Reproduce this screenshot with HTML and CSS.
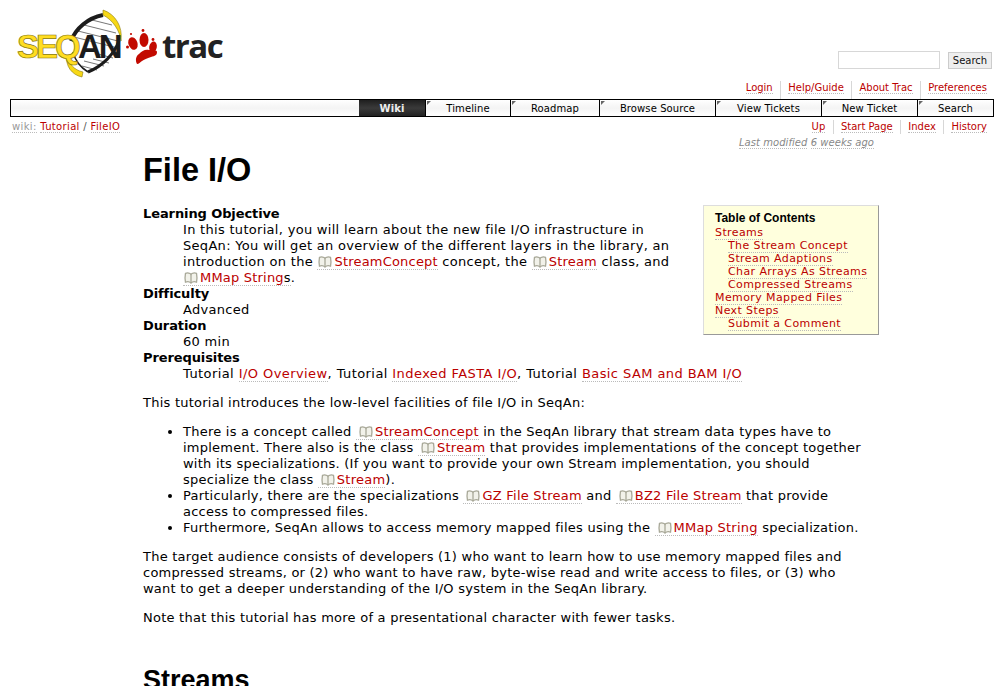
FILE: index.html
```html
<!DOCTYPE html>
<html>
  <head>
    <title>File I/O</title>
    <link rel="stylesheet" href="styles.css">
  </head>
  <body>
    <svg width="0" height="0" class="defs">
      <symbol id="book" viewBox="0 0 15 13">
        <path d="M7.500 2.500C6.500 1 3.500.6 1.500 1.500C1 4 1 8 1.500 11C3.500 10.300 6 10.500 7.500 12C9 10.500 11.500 10.300 13.500 11C14 8 14 4 13.500 1.500C11.500.6 8.500 1 7.500 2.500z" fill="#f2f2ea" stroke="#a8a898" stroke-width="1.400"/>
        <path d="M7.500 2.500v9.500" stroke="#a8a898" stroke-width="1.400"/>
      </symbol>
    </svg>

    <div id="banner">
      <svg class="logo" width="230" height="82" viewBox="0 0 230 82">
        <path d="M72 42C78 30 90 20 104 18C114 24 120 34 118 43C112 56 102 68 88 74C78 68 71 54 72 42z" fill="#fff"/>
        <path d="M92 22l20 5M84 27l32 8M78 33l40 10M74 39l44 11M98 56l15 4M93 61l16 4M84 63l20 5M82 68l15 4" stroke="#777" stroke-width="1" fill="none"/>
        <path d="M71 43C76 30 88 20 103 17" fill="none" stroke="#1c1c1c" stroke-width="4"/>
        <path d="M119 43C114 56 103 68 88 74" fill="none" stroke="#1c1c1c" stroke-width="3"/>
        <path d="M73 54C75 62 80 69 88 74" fill="none" stroke="#1c1c1c" stroke-width="1.500"/>
        <path d="M103 12C115 16 123 28 121 43C120 33 113 22 103 17z" fill="#f7d816" stroke="#8a7a10" stroke-width=".6"/>
        <path d="M67 57C69 66 74 72 83 74L82 79C72 77 65 68 67 57z" fill="#f7d816" stroke="#8a7a10" stroke-width=".6"/>
        <text x="17" y="60" class="logo-seq">SEQ</text>
        <text x="78" y="60" class="logo-an">AN</text>
        <g fill="#c20a00">
          <path d="M137 66C135 62 136 58 139 56C142 53 145 51 149 52C153 52 157 52 157 54C157 57 155 58 151 59C147 60 144 62 142 63C140 64 139 66 137 66z"/>
          <ellipse cx="133" cy="45.500" rx="4.500" ry="6.500" transform="rotate(-20 133 45.500)"/>
          <ellipse cx="144" cy="42" rx="4.500" ry="7"/>
          <ellipse cx="153" cy="49" rx="3.800" ry="5.500" transform="rotate(12 153 49)"/>
          <circle cx="127.500" cy="49" r="1.500"/>
          <circle cx="143" cy="32.500" r="1.400"/>
          <circle cx="153" cy="41.500" r="1.400"/>
          <circle cx="131" cy="36" r="1.100"/>
        </g>
        <text x="162" y="60" class="logo-trac">trac</text>
      </svg>
      <form class="search">
        <input type="text" class="search-box">
        <input type="submit" class="search-btn" value="Search">
      </form>
    </div>

    <ul class="metanav">
      <li><a href="#">Login</a></li>
      <li><a href="#">Help/Guide</a></li>
      <li><a href="#">About Trac</a></li>
      <li><a href="#">Preferences</a></li>
    </ul>

    <ul class="mainnav">
      <li class="active" style="width: 66px"><a href="#">Wiki</a></li>
      <li style="width: 85px"><a href="#">Timeline</a></li>
      <li style="width: 89px"><a href="#">Roadmap</a></li>
      <li style="width: 116px"><a href="#">Browse Source</a></li>
      <li style="width: 106px"><a href="#">View Tickets</a></li>
      <li style="width: 96px"><a href="#">New Ticket</a></li>
      <li style="width: 76px"><a href="#">Search</a></li>
    </ul>

    <div class="ctxtnav">
      <div class="path">
        <span class="dotted muted">wiki:</span>
        <a href="#">Tutorial</a> <span class="slash">/</span> <a href="#">FileIO</a>
      </div>
      <ul class="ctxt-links">
        <li><a href="#">Up</a></li>
        <li><a href="#">Start Page</a></li>
        <li><a href="#">Index</a></li>
        <li><a href="#">History</a></li>
      </ul>
    </div>
    <p class="lastmod"><span class="dotted">Last modified</span> <span class="dotted">6 weeks ago</span></p>

    <div id="content">
      <h1>File I/O</h1>

      <div class="toc">
        <h4>Table of Contents</h4>
        <ol>
          <li><a href="#">Streams</a>
            <ol>
              <li><a href="#">The Stream Concept</a></li>
              <li><a href="#">Stream Adaptions</a></li>
              <li><a href="#">Char Arrays As Streams</a></li>
              <li><a href="#">Compressed Streams</a></li>
            </ol>
          </li>
          <li><a href="#">Memory Mapped Files</a></li>
          <li><a href="#">Next Steps</a>
            <ol>
              <li><a href="#">Submit a Comment</a></li>
            </ol>
          </li>
        </ol>
      </div>

      <dl>
        <dt>Learning Objective</dt>
        <dd>In this tutorial, you will learn about the new file I/O infrastructure in SeqAn: You will get an overview of the different layers in the library, an introduction on the <a href="#" class="wiki"><svg class="book"><use href="#book"/></svg>StreamConcept</a> concept, the <a href="#" class="wiki"><svg class="book"><use href="#book"/></svg>Stream</a> class, and <a href="#" class="wiki"><svg class="book"><use href="#book"/></svg>MMap String<span class="plain">s</span></a>.</dd>
        <dt>Difficulty</dt>
        <dd>Advanced</dd>
        <dt>Duration</dt>
        <dd>60 min</dd>
        <dt>Prerequisites</dt>
        <dd class="prereq">Tutorial <a href="#">I/O Overview</a>, Tutorial <a href="#">Indexed FASTA I/O</a>, Tutorial <a href="#">Basic SAM and BAM I/O</a></dd>
      </dl>

      <p>This tutorial introduces the low-level facilities of file I/O in SeqAn:</p>

      <ul class="bullets">
        <li>There is a concept called <a href="#" class="wiki"><svg class="book"><use href="#book"/></svg>StreamConcept</a> in the SeqAn library that stream data types have to implement. There also is the class <a href="#" class="wiki"><svg class="book"><use href="#book"/></svg>Stream</a> that provides implementations of the concept together with its specializations. (If you want to provide your own Stream implementation, you should specialize the class <a href="#" class="wiki"><svg class="book"><use href="#book"/></svg>Stream</a>).</li>
        <li>Particularly, there are the specializations <a href="#" class="wiki"><svg class="book"><use href="#book"/></svg>GZ File Stream</a> and <a href="#" class="wiki"><svg class="book"><use href="#book"/></svg>BZ2 File Stream</a> that provide access to compressed files.</li>
        <li>Furthermore, SeqAn allows to access memory mapped files using the <a href="#" class="wiki"><svg class="book"><use href="#book"/></svg>MMap String</a> specialization.</li>
      </ul>

      <p>The target audience consists of developers (1) who want to learn how to use memory mapped files and compressed streams, or (2) who want to have raw, byte-wise read and write access to files, or (3) who want to get a deeper understanding of the I/O system in the SeqAn library.</p>

      <p>Note that this tutorial has more of a presentational character with fewer tasks.</p>

      <h2>Streams</h2>
    </div>
  </body>
</html>
```

FILE: styles.css
```css
html, body {
  height: 686px;
  overflow: hidden;
}

body {
  margin: 0;
  background: #fff;
  color: #000;
  font: 13px/16px "DejaVu Sans", Verdana, sans-serif;
}

a {
  color: #b00;
  text-decoration: none;
  border-bottom: 1px dotted #bbb;
}

.defs {
  display: block;
  height: 0;
}

ul, ol {
  list-style: none;
  margin: 0;
  padding: 0;
}

.dotted {
  border-bottom: 1px dotted #bbb;
}

/* Header */
#banner {
  display: flex;
  justify-content: space-between;
  align-items: flex-end;
  height: 80px;
  padding-right: 12px;
}

.logo {
  display: block;
  margin-top: -2px;
  flex: none;
}

.logo-seq, .logo-an {
  font: bold 33px "Liberation Sans", Arial, sans-serif;
  letter-spacing: -3px;
}

.logo-seq {
  fill: #ffdd22;
  stroke: #8a7a10;
  stroke-width: .7px;
}

.logo-an {
  fill: #1c1c1c;
}

.logo-trac {
  font: bold 33px "Open Sans", sans-serif;
  letter-spacing: -1.500px;
  fill: #222;
}

.search {
  display: flex;
  gap: 8px;
  align-items: center;
  margin-bottom: 11px;
}

.search-box {
  box-sizing: border-box;
  width: 102px;
  height: 18px;
  padding: 0;
  border: 1px solid #d7d7d7;
  background: #fff;
}

.search-btn {
  box-sizing: border-box;
  width: 44px;
  height: 17px;
  padding: 0;
  border: 1px solid #ccc;
  background: #eee;
  color: #111;
  font: 10px "DejaVu Sans", Verdana, sans-serif;
}

/* Nav links */
.metanav, .ctxt-links {
  display: flex;
  justify-content: flex-end;
  font-size: 10px;
  line-height: 13px;
}

.metanav {
  padding: 1px 17px 0 0;
  height: 18px;
}

.metanav li, .ctxt-links li {
  padding: 0 7.300px;
  border-right: 1px solid #d7d7d7;
}

.metanav li:last-child, .ctxt-links li:last-child {
  padding-right: 0;
  border-right: none;
}

.mainnav {
  display: flex;
  justify-content: flex-end;
  height: 16px;
  margin: 0 10px;
  border: 1px solid #000;
  background: linear-gradient(#fff, #f4f4f4 50%, #fff);
  font-size: 10px;
  line-height: 17px;
  letter-spacing: .1px;
}

.mainnav li {
  box-sizing: border-box;
  position: relative;
  text-align: center;
  border-left: 1px solid #000;
}

.mainnav li::before {
  content: "";
  position: absolute;
  left: 1px;
  top: 1px;
  border-top: 4px solid #666;
  border-right: 4px solid transparent;
}

.mainnav a {
  display: block;
  color: #000;
  border-bottom: none;
}

.mainnav .active {
  border-left: none;
  background: linear-gradient(#1f1f1f, #3a3a3a 50%, #222);
}

.mainnav .active::before {
  display: none;
}

.mainnav .active a {
  color: #eee;
  font-weight: bold;
}

.ctxtnav {
  display: flex;
  justify-content: space-between;
  padding: 3px 17px 0 12px;
  height: 14px;
  font-size: 10px;
  line-height: 13px;
}

.path {
  letter-spacing: .35px;
}

.muted {
  color: #999;
}

.slash {
  color: #555;
}

.lastmod {
  margin: 2px 130px 0 0;
  text-align: right;
  color: #888;
  font-size: 10px;
  font-style: italic;
  line-height: 13px;
  letter-spacing: .05px;
}

/* Page */
#content {
  width: 722px;
  margin-left: 143px;
  letter-spacing: .24px;
}

h1 {
  margin: 3px 0 18px;
  font: bold 32.500px/36px "Liberation Sans", Arial, sans-serif;
  letter-spacing: 0;
}

h2 {
  margin: 39px 0 0;
  font: bold 27px/30px "Liberation Sans", Arial, sans-serif;
  letter-spacing: 0;
}

p {
  margin: 13px 0;
}

dl {
  margin: 0;
}

dt {
  font-weight: bold;
  letter-spacing: -.1px;
}

dd {
  margin: 0 0 0 40px;
  letter-spacing: .3px;
}

dd a.wiki {
  letter-spacing: .2px;
}

dd .book {
  margin-left: 1px;
}

dd.prereq {
  letter-spacing: .42px;
}

.book {
  display: inline-block;
  width: 14px;
  height: 12px;
  margin: 0 2px 0 3px;
  vertical-align: -2px;
}

a.wiki .plain {
  color: #000;
}

.bullets {
  list-style: disc;
  padding-left: 40px;
}

.toc {
  float: right;
  box-sizing: border-box;
  width: 176px;
  height: 130px;
  margin: -1px -14px 8px 16px;
  padding: 5px 4px 5px 11px;
  background: #ffffdd;
  border: 1px solid #d7d7d7;
  border-color: #ddd #999 #999 #ddd;
  font-size: 11px;
  line-height: 13px;
  letter-spacing: .4px;
}

.toc h4 {
  margin: 0 0 1px;
  font: bold 12px/14px "Liberation Sans", Arial, sans-serif;
  letter-spacing: 0;
}

.toc ol ol {
  padding-left: 13px;
}
```
